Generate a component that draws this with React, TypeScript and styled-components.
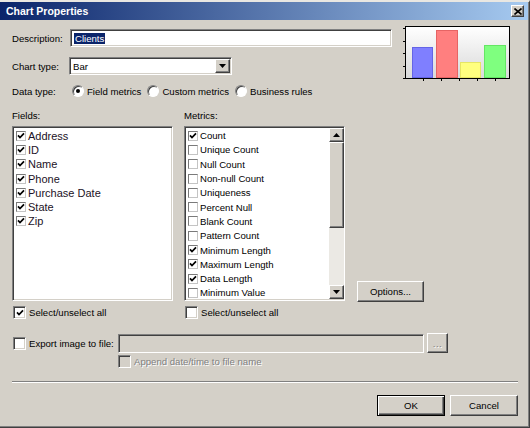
import styled, { createGlobalStyle } from "styled-components";

const GlobalStyle = createGlobalStyle`
  html, body {
    margin: 0;
    padding: 0;
    background: #d4d0c8;
  }
  body {
    font-family: "Liberation Sans", Arial, sans-serif;
    font-size: 9.6px;
    color: #000;
  }
  * {
    box-sizing: border-box;
  }
`;

const fields = ["Address", "ID", "Name", "Phone", "Purchase Date", "State", "Zip"];

const metrics: [string, boolean][] = [
  ["Count", true],
  ["Unique Count", false],
  ["Null Count", false],
  ["Non-null Count", false],
  ["Uniqueness", false],
  ["Percent Null", false],
  ["Blank Count", false],
  ["Pattern Count", false],
  ["Minimum Length", true],
  ["Maximum Length", true],
  ["Data Length", true],
  ["Minimum Value", false],
];

function CheckMark({ color = "#000" }: { color?: string }) {
  return (
    <svg width="8" height="8" viewBox="0 0 8 8">
      <path d="M1 3.4 L3 5.6 L7 1.4" fill="none" stroke={color} strokeWidth="1.7" />
    </svg>
  );
}

function BarChart() {
  return (
    <ChartSvg width="108" height="56" viewBox="0 0 108 56">
      <defs>
        <linearGradient id="plotBg" x1="0" y1="0" x2="0" y2="1">
          <stop offset="0" stopColor="#ffffff" />
          <stop offset="1" stopColor="#d9d9d9" />
        </linearGradient>
      </defs>
      <rect x="3.5" y="1.5" width="104" height="52" fill="url(#plotBg)" stroke="#000" />
      {[3, 16, 28, 41, 53].map((y) => (
        <line key={y} x1="1" y1={y + 0.5} x2="3.5" y2={y + 0.5} stroke="#000" />
      ))}
      {[21, 39, 57, 75, 93].map((x) => (
        <line key={x} x1={x + 0.5} y1="53.5" x2={x + 0.5} y2="56" stroke="#000" />
      ))}
      <rect x="10.5" y="22.5" width="20" height="30" fill="#7f7fff" stroke="#6464e6" />
      <rect x="34.5" y="5.5" width="21" height="47" fill="#ff7f7f" stroke="#e66464" />
      <rect x="58.5" y="37.5" width="20" height="15" fill="#ffff7f" stroke="#e6e664" />
      <rect x="82.5" y="20.5" width="21" height="32" fill="#7fff7f" stroke="#64e664" />
    </ChartSvg>
  );
}

export default function App() {
  return (
    <>
      <GlobalStyle />
      <Window>
        <TitleBar>
          <Title>Chart Properties</Title>
          <CloseButton>
            <svg width="8" height="7" viewBox="0 0 8 7">
              <path d="M0.5 0.5 L7.5 6.5 M7.5 0.5 L0.5 6.5" stroke="#000" strokeWidth="1.6" />
            </svg>
          </CloseButton>
        </TitleBar>

        <Body>
          <TopArea>
            <FormColumn>
              <FieldRow>
                <FormLabel $width={58}>Description:</FormLabel>
                <SunkenField $width={322}>
                  <Selected>Clients</Selected>
                </SunkenField>
              </FieldRow>
              <FieldRow>
                <FormLabel $width={57}>Chart type:</FormLabel>
                <SunkenField $width={163}>
                  <SelectText>Bar</SelectText>
                  <DropButton>
                    <svg width="7" height="4" viewBox="0 0 7 4">
                      <path d="M0 0 L7 0 L3.5 4 Z" fill="#000" />
                    </svg>
                  </DropButton>
                </SunkenField>
              </FieldRow>
              <RadioRow>
                <FormLabel $width={60}>Data type:</FormLabel>
                <RadioOption $gap={6}>
                  <Radio $checked />
                  Field metrics
                </RadioOption>
                <RadioOption $gap={6}>
                  <Radio />
                  Custom metrics
                </RadioOption>
                <RadioOption $gap={0}>
                  <Radio />
                  Business rules
                </RadioOption>
              </RadioRow>
            </FormColumn>
            <BarChart />
          </TopArea>

          <ListsSection>
            <ListLabel>Fields:</ListLabel>
            <ListLabel>Metrics:</ListLabel>
            <span />
            <ListBox>
              <ListItems>
                {fields.map((f) => (
                  <ListItem key={f} $size={11} $color="#1c1226">
                    <ListCheck>
                      <CheckMark />
                    </ListCheck>
                    {f}
                  </ListItem>
                ))}
              </ListItems>
            </ListBox>
            <ListBox>
              <ListItems>
                {metrics.map(([m, on]) => (
                  <ListItem key={m} $size={9.6} $color="#000">
                    <ListCheck>{on && <CheckMark />}</ListCheck>
                    {m}
                  </ListItem>
                ))}
              </ListItems>
              <Scrollbar>
                <ScrollButton>
                  <svg width="7" height="4" viewBox="0 0 7 4">
                    <path d="M0 4 L7 4 L3.5 0 Z" fill="#000" />
                  </svg>
                </ScrollButton>
                <Thumb />
                <Track />
                <ScrollButton>
                  <svg width="7" height="4" viewBox="0 0 7 4">
                    <path d="M0 0 L7 0 L3.5 4 Z" fill="#000" />
                  </svg>
                </ScrollButton>
              </Scrollbar>
            </ListBox>
            <OptionsButton>Options...</OptionsButton>
          </ListsSection>

          <SelectAllRow>
            <CheckLabel>
              <Checkbox>
                <CheckMark />
              </Checkbox>
              Select/unselect all
            </CheckLabel>
            <CheckLabel>
              <Checkbox />
              Select/unselect all
            </CheckLabel>
          </SelectAllRow>

          <ExportRow>
            <ExportCheck>
              <Checkbox />
              Export image to file:
            </ExportCheck>
            <PathInput />
            <BrowseButton>...</BrowseButton>
          </ExportRow>

          <AppendRow>
            <CheckLabel $disabled>
              <Checkbox $disabled />
              Append date/time to file name
            </CheckLabel>
          </AppendRow>

          <Separator />

          <ButtonRow>
            <Button $default>OK</Button>
            <Button>Cancel</Button>
          </ButtonRow>
        </Body>
      </Window>
    </>
  );
}

const Window = styled.div`
  width: 530px;
  height: 428px;
  background: #d4d0c8;
  display: flex;
  flex-direction: column;
  border-top: 2px solid #e9e7e2;
  border-right: 1px solid #404040;
  border-bottom: 1px solid #404040;
  box-shadow: inset -1px -1px #808080;
  overflow: hidden;
`;

const TitleBar = styled.div`
  height: 18px;
  margin-right: 1px;
  padding-left: 6px;
  padding-right: 4px;
  display: flex;
  align-items: center;
  justify-content: space-between;
  background: linear-gradient(to right, #0a246a, #a6caf0);
`;

const Title = styled.span`
  color: #fff;
  font-weight: bold;
  font-size: 10.5px;
`;

const CloseButton = styled.div`
  width: 13px;
  height: 12px;
  display: flex;
  align-items: center;
  justify-content: center;
  background: #d4d0c8;
  border: 1px solid;
  border-color: #fff #404040 #404040 #fff;
  box-shadow: inset -1px -1px #808080;
`;

const Body = styled.div`
  flex: 1;
  display: flex;
  flex-direction: column;
  padding: 0 11px 0 12px;
`;

const TopArea = styled.div`
  display: flex;
  align-items: flex-start;
  margin-top: 5px;
`;

const FormColumn = styled.div`
  display: flex;
  flex-direction: column;
  gap: 10px;
  padding-top: 4px;
`;

const FieldRow = styled.div`
  display: flex;
  align-items: center;
  height: 18px;
`;

const RadioRow = styled.div`
  display: flex;
  align-items: center;
  height: 12px;
`;

const FormLabel = styled.span<{ $width: number }>`
  width: ${(p) => p.$width}px;
  flex: none;
`;

const SunkenField = styled.div<{ $width: number }>`
  width: ${(p) => p.$width}px;
  height: 18px;
  display: flex;
  align-items: center;
  padding-left: 3px;
  background: #fff;
  border: 1px solid;
  border-color: #808080 #fff #fff #808080;
  box-shadow: inset 1px 1px #404040, inset -1px -1px #d4d0c8;
`;

const Selected = styled.span`
  background: #0a246a;
  color: #fff;
  padding: 0 1px;
  line-height: 11px;
`;

const SelectText = styled.span`
  flex: 1;
`;

const DropButton = styled.div`
  width: 15px;
  height: 14px;
  margin-right: 1px;
  display: flex;
  align-items: center;
  justify-content: center;
  background: #d4d0c8;
  border: 1px solid;
  border-color: #fff #404040 #404040 #fff;
  box-shadow: inset -1px -1px #808080;
`;

const RadioOption = styled.label<{ $gap: number }>`
  display: flex;
  align-items: center;
  gap: 3px;
  margin-right: ${(p) => p.$gap}px;
`;

const Radio = styled.span<{ $checked?: boolean }>`
  width: 12px;
  height: 12px;
  border-radius: 50%;
  background: #fff;
  border: 1px solid;
  border-color: #808080 #fff #fff #808080;
  box-shadow: inset 1px 1px #404040;
  display: flex;
  align-items: center;
  justify-content: center;

  &::after {
    content: "";
    width: 4px;
    height: 4px;
    border-radius: 50%;
    background: ${(p) => (p.$checked ? "#000" : "transparent")};
  }
`;

const ChartSvg = styled.svg`
  margin-left: auto;
  margin-right: 8px;
  flex: none;
`;

const ListsSection = styled.div`
  display: grid;
  grid-template-columns: 161px 161px 67px;
  grid-template-rows: 12px 175px;
  column-gap: 11px;
  row-gap: 4px;
  margin-top: 13px;
`;

const ListLabel = styled.span`
  line-height: 12px;
`;

const ListBox = styled.div`
  display: flex;
  background: #fff;
  border: 1px solid;
  border-color: #808080 #fff #fff #808080;
  box-shadow: inset 1px 1px #404040, inset -1px -1px #d4d0c8;
  overflow: hidden;
`;

const ListItems = styled.div`
  flex: 1;
  padding: 1.5px 0 0 3px;
  overflow: hidden;
`;

const ListItem = styled.div<{ $size: number; $color: string }>`
  height: 14.3px;
  display: flex;
  align-items: center;
  gap: 2px;
  font-size: ${(p) => p.$size}px;
  color: ${(p) => p.$color};
  white-space: nowrap;
`;

const ListCheck = styled.span`
  width: 10px;
  height: 10px;
  flex: none;
  display: flex;
  align-items: center;
  justify-content: center;
  background: #fff;
  border: 1px solid;
  border-color: #7a7a7a #c4c4c4 #c4c4c4 #7a7a7a;
`;

const Scrollbar = styled.div`
  width: 15px;
  flex: none;
  display: flex;
  flex-direction: column;
  margin: 1px 0;
`;

const raised = `
  background: #d4d0c8;
  border: 1px solid;
  border-color: #fff #404040 #404040 #fff;
  box-shadow: inset -1px -1px #808080;
`;

const ScrollButton = styled.div`
  height: 14px;
  flex: none;
  display: flex;
  align-items: center;
  justify-content: center;
  ${raised}
`;

const Thumb = styled.div`
  height: 86px;
  flex: none;
  ${raised}
`;

const Track = styled.div`
  flex: 1;
  background: #ebe9e4;
`;

const Button = styled.button<{ $default?: boolean }>`
  width: 68px;
  height: 21px;
  padding: 0;
  font-family: inherit;
  font-size: 9.6px;
  color: #000;
  background: #d4d0c8;
  border: 1px solid;
  border-color: ${(p) => (p.$default ? "#000" : "#fff #404040 #404040 #fff")};
  box-shadow: ${(p) =>
    p.$default
      ? "inset 1px 1px #fff, inset -1px -1px #404040, inset -2px -2px #808080"
      : "inset -1px -1px #808080"};
`;

const OptionsButton = styled(Button)`
  width: 67px;
  align-self: end;
  margin-left: 1px;
  margin-bottom: -1px;
`;

const SelectAllRow = styled.div`
  display: grid;
  grid-template-columns: 161px 161px;
  column-gap: 11px;
  margin-top: 5px;
`;

const CheckLabel = styled.label<{ $disabled?: boolean }>`
  display: flex;
  align-items: center;
  gap: 3px;
  padding-left: 1px;
  color: ${(p) => (p.$disabled ? "#808080" : "#000")};
  text-shadow: ${(p) => (p.$disabled ? "1px 1px #fff" : "none")};
`;

const Checkbox = styled.span<{ $disabled?: boolean }>`
  width: 13px;
  height: 13px;
  flex: none;
  display: flex;
  align-items: center;
  justify-content: center;
  background: ${(p) => (p.$disabled ? "#d4d0c8" : "#fff")};
  border: 1px solid;
  border-color: #808080 #fff #fff #808080;
  box-shadow: inset 1px 1px #404040, inset -1px -1px #d4d0c8;
`;

const ExportRow = styled.div`
  display: flex;
  align-items: center;
  height: 20px;
  margin-top: 14px;
`;

const ExportCheck = styled(CheckLabel)`
  width: 106px;
  flex: none;
`;

const PathInput = styled.div`
  width: 306px;
  height: 19px;
  background: #d4d0c8;
  border: 1px solid;
  border-color: #808080 #fff #fff #808080;
  box-shadow: inset 1px 1px #404040, inset -1px -1px #d4d0c8;
`;

const BrowseButton = styled(Button)`
  width: 21px;
  height: 20px;
  margin-left: 3px;
  color: #808080;
  text-shadow: 1px 1px #fff;
  letter-spacing: 0.5px;
`;

const AppendRow = styled.div`
  display: flex;
  height: 13px;
  margin-top: 2px;
  padding-left: 105px;
`;

const Separator = styled.div`
  height: 2px;
  margin-top: 13px;
  border-top: 1px solid #808080;
  border-bottom: 1px solid #fff;
`;

const ButtonRow = styled.div`
  display: flex;
  justify-content: flex-end;
  gap: 5px;
  margin-top: 12px;
`;
